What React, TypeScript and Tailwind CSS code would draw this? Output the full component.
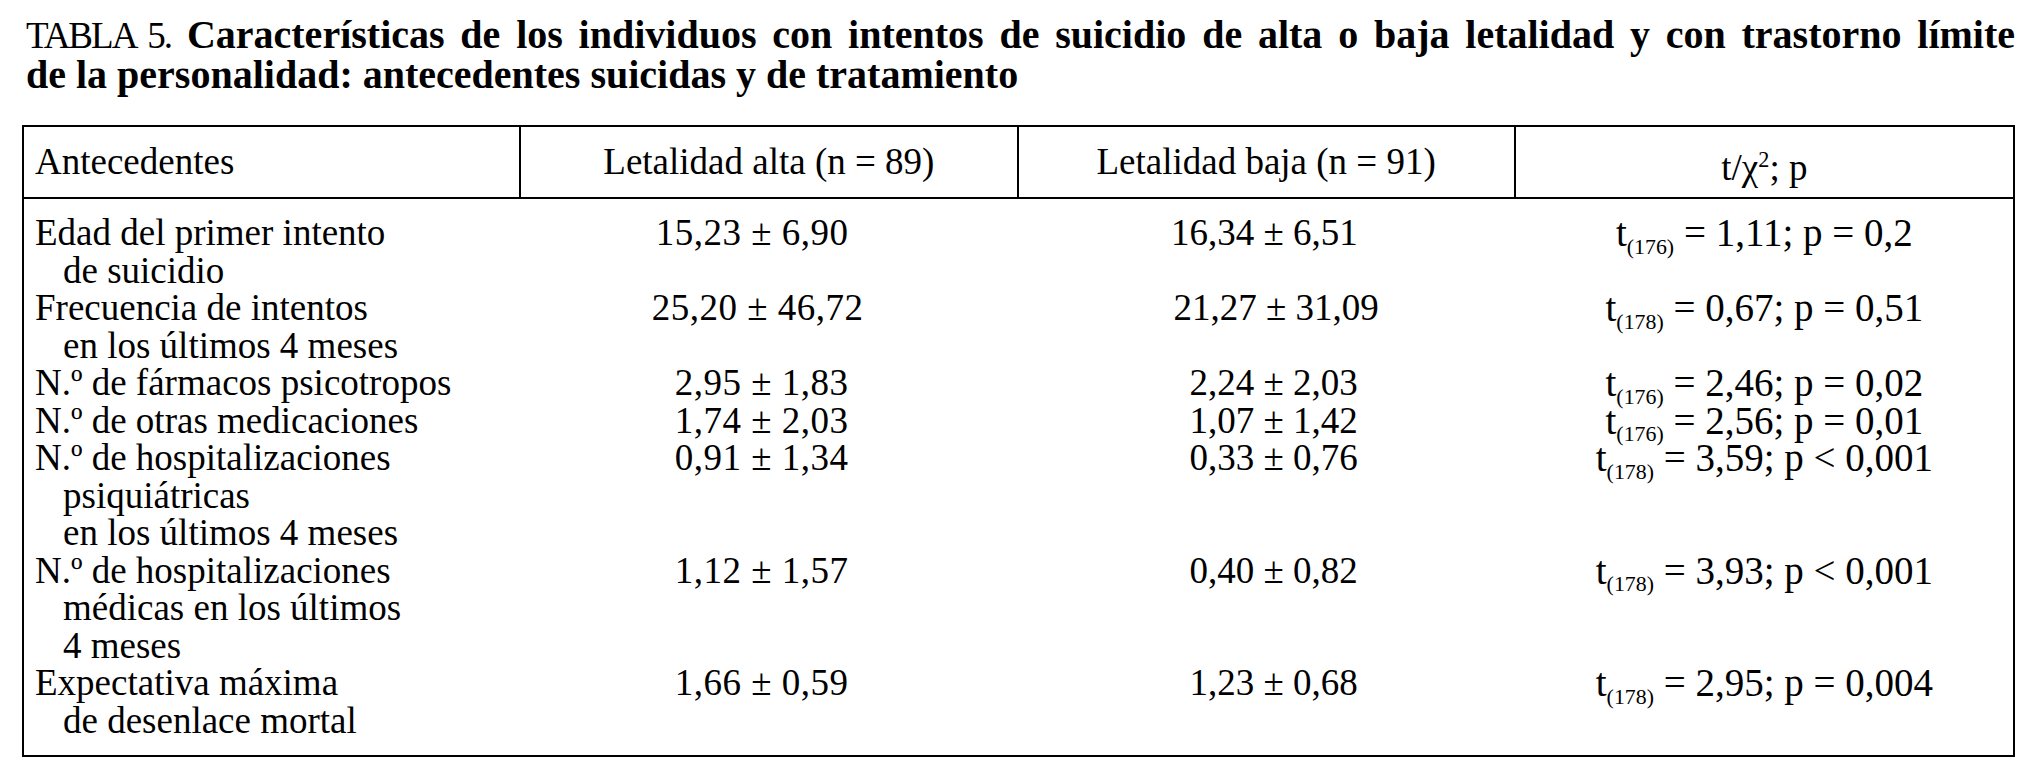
import React from "react";

type Row = {
  label: string[];
  alta: string;
  baja: string;
  df: string;
  stat: string;
  wide?: boolean;
};

const rows: Row[] = [
  {
    label: ["Edad del primer intento", "de suicidio"],
    alta: "15,23 ± 6,90",
    baja: "16,34 ± 6,51",
    df: "176",
    stat: "1,11; p = 0,2",
  },
  {
    label: ["Frecuencia de intentos", "en los últimos 4 meses"],
    alta: "25,20 ± 46,72",
    baja: "21,27 ± 31,09",
    df: "178",
    stat: "0,67; p = 0,51",
    wide: true,
  },
  {
    label: ["N.º de fármacos psicotropos"],
    alta: "2,95 ± 1,83",
    baja: "2,24 ± 2,03",
    df: "176",
    stat: "2,46; p = 0,02",
  },
  {
    label: ["N.º de otras medicaciones"],
    alta: "1,74 ± 2,03",
    baja: "1,07 ± 1,42",
    df: "176",
    stat: "2,56; p = 0,01",
  },
  {
    label: ["N.º de hospitalizaciones", "psiquiátricas", "en los últimos 4 meses"],
    alta: "0,91 ± 1,34",
    baja: "0,33 ± 0,76",
    df: "178",
    stat: "3,59; p < 0,001",
  },
  {
    label: ["N.º de hospitalizaciones", "médicas en los últimos", "4 meses"],
    alta: "1,12 ± 1,57",
    baja: "0,40 ± 0,82",
    df: "178",
    stat: "3,93; p < 0,001",
  },
  {
    label: ["Expectativa máxima", "de desenlace mortal"],
    alta: "1,66 ± 0,59",
    baja: "1,23 ± 0,68",
    df: "178",
    stat: "2,95; p = 0,004",
  },
];

export default function App() {
  return (
    <div className="min-h-screen bg-white px-[22px] pt-[15px] font-['Liberation_Serif','Times_New_Roman',serif] text-black">
      {/* Title: first line justified to the full width, like the typeset original */}
      <h1 className="pl-[4px] text-[40px] leading-[39px]">
        <div className="whitespace-nowrap text-justify [text-align-last:justify]">
          <span className="text-[37px] tracking-[-2px]">TABLA 5.</span>{" "}
          <span className="font-bold">
            Características de los individuos con intentos de suicidio de alta o baja letalidad y con trastorno límite
          </span>
        </div>
        <div className="font-bold">de la personalidad: antecedentes suicidas y de tratamiento</div>
      </h1>

      {/* Table */}
      <div className="mt-[31px] border-2 border-black text-[37px] leading-[37.5px]">
        <div className="grid h-[72px] grid-cols-4 border-b-2 border-black">
          <div className="flex items-center border-r-2 border-black pl-[11px]">Antecedentes</div>
          <div className="flex items-center justify-center border-r-2 border-black">
            Letalidad alta (n = 89)
          </div>
          <div className="flex items-center justify-center border-r-2 border-black">
            Letalidad baja (n = 91)
          </div>
          <div className="flex items-center justify-center pt-[12px]">
            <span>
              t/χ<sup className="top-[-0.6em] text-[0.6em]">2</sup>; p
            </span>
          </div>
        </div>

        <div className="pt-[15px] pb-[16px]">
          {rows.map((row, i) => (
            <div key={i} className="grid grid-cols-4">
              <div className="pl-[11px]">
                {row.label.map((line, j) => (
                  <div key={j} className={j > 0 ? "pl-[28px]" : ""}>
                    {line}
                  </div>
                ))}
              </div>
              <div className={row.wide ? "text-right pr-[155px] tracking-[0.5px]" : "text-right pr-[170px] tracking-[0.5px]"}>
                {row.alta}
              </div>
              <div className={row.wide ? "text-right pr-[137px]" : "text-right pr-[158px]"}>{row.baja}</div>
              <div className="text-center text-[39px]">
                t<sub className="bottom-[-0.35em] text-[0.56em]">({row.df})</sub> = {row.stat}
              </div>
            </div>
          ))}
        </div>
      </div>
    </div>
  );
}
